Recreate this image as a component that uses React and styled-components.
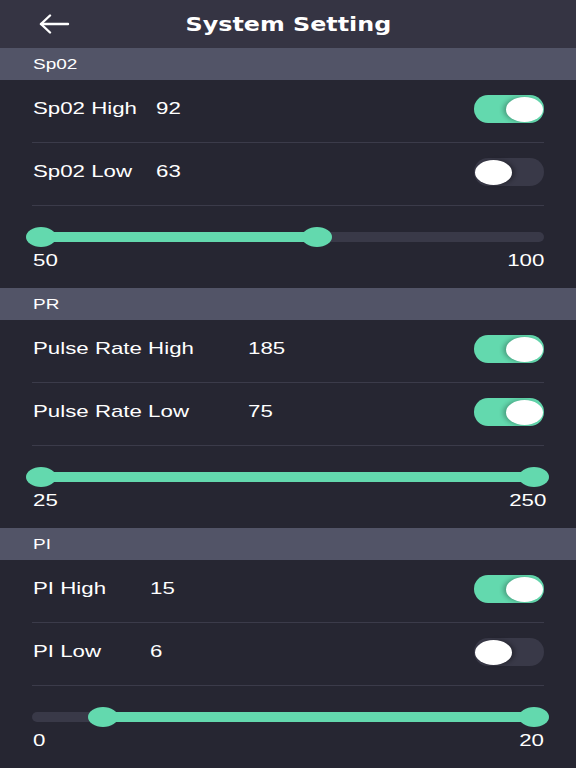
import React from 'react';
import styled, { createGlobalStyle } from 'styled-components';

const GlobalStyle = createGlobalStyle`
  html, body {
    margin: 0;
    padding: 0;
    background: #262632;
  }
  body {
    font-family: 'Liberation Sans', Arial, sans-serif;
    color: #ffffff;
  }
`;

// the reference UI is drawn stretched sideways, so text is widened the same way
const Wide = styled.span`
  display: inline-block;
  transform: scaleX(${(p) => p.$k || 1.31});
  transform-origin: ${(p) => p.$origin || 'left'} center;
`;

const Page = styled.div`
  width: 576px;
  background: #262632;
`;

const TopBar = styled.header`
  height: 48px;
  background: #353443;
  display: grid;
  grid-template-columns: 1fr auto 1fr;
  align-items: center;
`;

const BackButton = styled.button`
  justify-self: start;
  margin-left: 38px;
  padding: 0;
  border: none;
  background: none;
  display: flex;
  color: #ffffff;
`;

const Title = styled.h1`
  margin: 0;
  font-family: 'DejaVu Sans', Verdana, sans-serif;
  font-size: 20px;
  font-weight: 700;
  padding-left: 1px;
`;

const SectionHeader = styled.div`
  height: 32px;
  background: #525467;
  display: flex;
  align-items: center;
  padding-left: 33px;
  font-size: 14.5px;
`;

const SectionBody = styled.div`
  padding: 0 32px;
`;

const Row = styled.div`
  height: 63px;
  box-sizing: border-box;
  border-bottom: 1px solid #3b3b4a;
  display: flex;
  align-items: center;
  padding: 0 0 4px 1px;
  font-size: 17px;
`;

const Label = styled.span`
  width: ${(p) => p.$col}px;
`;

const Value = styled.span`
  flex: 1;
`;

const Toggle = styled.div`
  width: 70px;
  height: 28px;
  border-radius: 14px;
  background: ${(p) => (p.$on ? '#63d9ae' : '#393948')};
  display: flex;
  align-items: center;
  justify-content: ${(p) => (p.$on ? 'flex-end' : 'flex-start')};
  padding: 0 1px;
  box-sizing: border-box;
`;

const Knob = styled.div`
  width: 37px;
  height: 25px;
  border-radius: 50%;
  background: #ffffff;
  box-shadow: ${(p) => (p.$on ? '-3px 0 4px rgba(0,0,0,0.25)' : '3px 0 4px rgba(0,0,0,0.3)')};
`;

const SliderBlock = styled.div`
  height: 82px;
  box-sizing: border-box;
  padding-top: 26px;
`;

const Track = styled.div`
  position: relative;
  height: 10px;
  border-radius: 5px;
  background: #393948;
`;

const Fill = styled.div`
  position: absolute;
  top: 0;
  height: 10px;
  background: #63d9ae;
`;

const Thumb = styled.div`
  position: absolute;
  top: -5px;
  width: 30px;
  height: 20px;
  border-radius: 50%;
  background: #63d9ae;
`;

const Scale = styled.div`
  display: flex;
  justify-content: space-between;
  margin-top: 9px;
  font-size: 17px;
  line-height: 20px;
  padding-left: 1px;
  margin-right: ${(p) => p.$overhang}px;
`;

const ArrowIcon = () => (
  <svg width="32" height="20" viewBox="0 0 32 20" fill="none" stroke="#fff" strokeWidth="2.4" strokeLinecap="round" strokeLinejoin="round">
    <path d="M3 10 H30" />
    <path d="M12 1.5 L3 10 L12 18.5" />
  </svg>
);

const pos = (f) => 9 + f * 493;

function RangeSlider({ low, high, min, max, overhang }) {
  const a = pos(low);
  const b = pos(high);
  const start = low === 0 ? 0 : a;
  return (
    <SliderBlock>
      <Track>
        <Fill style={{ left: start, width: b - start }} />
        <Thumb style={{ left: a - 15 }} />
        <Thumb style={{ left: b - 15 }} />
      </Track>
      <Scale $overhang={overhang}>
        <Wide>{min}</Wide>
        <Wide $origin="right">{max}</Wide>
      </Scale>
    </SliderBlock>
  );
}

const sections = [
  {
    title: 'Sp02',
    col: 123,
    rows: [
      { label: 'Sp02 High', value: 92, on: true },
      { label: 'Sp02 Low', value: 63, on: false },
    ],
    slider: { low: 0, high: 0.56, min: 50, max: 100, overhang: 0 },
  },
  {
    title: 'PR',
    col: 215,
    rows: [
      { label: 'Pulse Rate High', value: 185, on: true },
      { label: 'Pulse Rate Low', value: 75, on: true },
    ],
    slider: { low: 0, high: 1, min: 25, max: 250, overhang: -2 },
  },
  {
    title: 'PI',
    col: 117,
    rows: [
      { label: 'PI High', value: 15, on: true },
      { label: 'PI Low', value: 6, on: false },
    ],
    slider: { low: 0.126, high: 1, min: 0, max: 20, overhang: 0 },
  },
];

export default function App() {
  return (
    <Page>
      <GlobalStyle />
      <TopBar>
        <BackButton aria-label="Back">
          <ArrowIcon />
        </BackButton>
        <Title>
          <Wide $origin="center" $k={1.19}>System Setting</Wide>
        </Title>
        <span />
      </TopBar>
      {sections.map((s) => (
        <section key={s.title}>
          <SectionHeader>
            <Wide>{s.title}</Wide>
          </SectionHeader>
          <SectionBody>
            {s.rows.map((r) => (
              <Row key={r.label}>
                <Label $col={s.col}>
                  <Wide>{r.label}</Wide>
                </Label>
                <Value>
                  <Wide>{r.value}</Wide>
                </Value>
                <Toggle $on={r.on}>
                  <Knob $on={r.on} />
                </Toggle>
              </Row>
            ))}
            <RangeSlider {...s.slider} />
          </SectionBody>
        </section>
      ))}
    </Page>
  );
}
